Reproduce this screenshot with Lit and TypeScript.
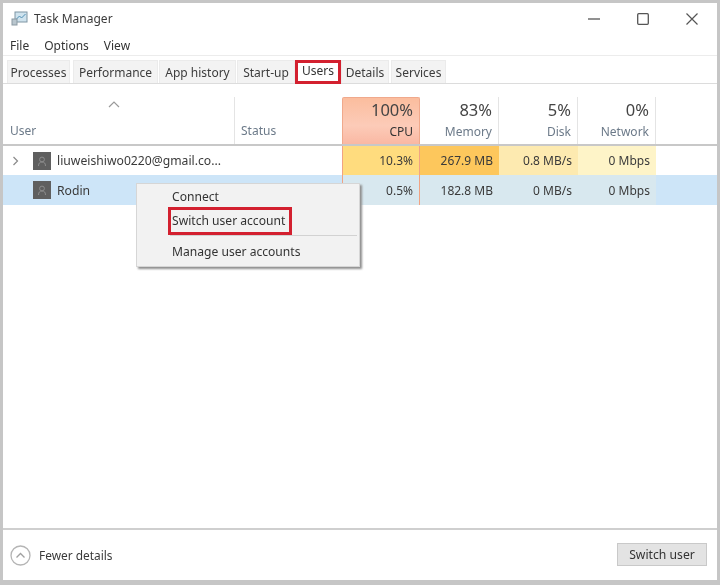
import { LitElement, html, css, svg } from "lit";
import { customElement } from "lit/decorators.js";

const tabs: [string, number, number][] = [
  ["Processes", 0, 63],
  ["Performance", 3, 85],
  ["App history", 1, 77],
  ["Start-up", 1, 58],
  ["Users", 0, 46],
  ["Details", 0, 48],
  ["Services", 2, 55],
];

const heads = [
  { pct: "100%", name: "CPU", hot: true },
  { pct: "83%", name: "Memory" },
  { pct: "5%", name: "Disk" },
  { pct: "0%", name: "Network" },
];

const rows = [
  { user: "liuweishiwo0220@gmail.co...", expand: true, sel: false, cells: [["10.3%", "c1"], ["267.9 MB", "c2"], ["0.8 MB/s", "c3"], ["0 Mbps", "c4"]] },
  { user: "Rodin", expand: false, sel: true, cells: [["0.5%", "b1"], ["182.8 MB", "b1"], ["0 MB/s", "b1"], ["0 Mbps", "b1"]] },
];

const avatar = html`<svg class="avatar" viewBox="0 0 18 18"><rect width="18" height="18" fill="#5f5f5f"/>${svg`<circle cx="9" cy="7.500" r="2.400" fill="none" stroke="#8d8d8d"/><path d="M5.500 14c0-3 1.500-4 3.500-4s3.500 1 3.500 4" fill="none" stroke="#8d8d8d"/>`}</svg>`;

@customElement("app-root")
export class AppRoot extends LitElement {
  static styles = css`
    :host { display: block; width: 720px; height: 585px; background: #c6c6c6; overflow: hidden; }
    .frame { box-sizing: border-box; width: 720px; height: 585px; padding: 3px 3px 5px 3px; filter: blur(0.5px); }
    .win { position: relative; height: 100%; background: #fff; display: flex; flex-direction: column;
      font-family: "Noto Sans", "Open Sans", sans-serif; font-size: 12px; color: #2b2b2b; }
    .title { height: 31px; flex: none; display: flex; align-items: center; padding-left: 8px; gap: 6px; font-size: 12px; color: #3a3a3a; }
    .app-ico { width: 17px; height: 15px; flex: none; }
    .spacer { flex: 1; }
    .wbtns { display: flex; align-items: center; gap: 37px; padding-right: 19px; }
    .wbtns svg { width: 12px; height: 12px; display: block; }
    .menu { height: 21px; flex: none; display: flex; align-items: center; padding-left: 7px; padding-top: 2px; gap: 15px; color: #333; font-size: 12px; box-sizing: border-box; }
    .tabs { height: 29px; flex: none; box-sizing: border-box; display: flex; align-items: flex-end; padding-left: 4px;
      border-top: 1px solid #ececec; border-bottom: 1px solid #dcdcdc; padding-top: 4px; }
    .tab { height: 23px; box-sizing: border-box; background: #f3f3f3; border: 1px solid #ebebeb; border-bottom: none;
      display: flex; align-items: center; justify-content: center; color: #3c3c3c; font-size: 12px; white-space: nowrap; }
    .tab.on { position: relative; background: #fff; border: 3px solid #d3202f; height: 24px; margin-bottom: -1px; padding-bottom: 3px; color: #333; }
    .grid { display: grid; grid-template-columns: 232px 107px 78px 79px 79px 78px 1fr; }
    .thead { flex: none; border-bottom: 2px solid #c8c8c8; height: 60px; box-sizing: content-box; }
    .th { position: relative; box-sizing: border-box; display: flex; flex-direction: column; justify-content: flex-end; margin-top: 13px; padding: 0 6px 5px; color: #6c7a89; font-size: 12px; border-right: 1px solid #e4e4e4; }
    .th.first { padding-left: 7px; }
    .sort { position: absolute; top: 4px; left: 105px; width: 12px; height: 7px; }
    .th.m { align-items: flex-end; padding: 3px 6px 0 0; justify-content: flex-start; }
    .th.m .pct { font-size: 16.500px; line-height: 20px; color: #444; }
    .th.m .nm { font-size: 12px; line-height: 16px; margin-top: 4px; color: #6c7a89; }
    .th.hot { background: linear-gradient(#fbbd9e, #fccbb8 60%, #fab8a3); border: 1px solid #f0a98c; border-bottom: none; border-radius: 2px 2px 0 0; padding: 2px 6px 0 0; }
    .th.hot .nm { color: #333; }
    .row { height: 29px; }
    .row.sel { background: #cde5f8; height: 30px; }
    .cell { display: flex; align-items: center; box-sizing: border-box; white-space: nowrap; font-size: 12px; color: #3a3a3a; }
    .cell.user { gap: 6px; padding-left: 10px; font-size: 12.200px; }
    .chev { width: 14px; height: 10px; flex: none; }
    .avatar { width: 18px; height: 18px; flex: none; }
    .num { justify-content: flex-end; padding-right: 6px; }
    .c1 { background: #ffdc7e; }
    .c2 { background: #fdc75c; }
    .c3 { background: #fdeab0; }
    .c4 { background: #fef4c8; }
    .b1 { background: #d8e8ef; }
    .cpu-edge { border-left: 1px solid #f1a383; border-right: 1px solid #f1a383; }
    .body { flex: 1; }
    .foot { flex: none; height: 52px; box-sizing: border-box; border-top: 2px solid #cfcfcf; display: flex; align-items: center; padding: 0 10px 0 7px; }
    .fewer { display: flex; align-items: center; gap: 8px; color: #3a3a3a; font-size: 11.900px; }
    .circle { width: 21px; height: 21px; display: block; }
    .btn { width: 90px; height: 23px; box-sizing: border-box; background: #e3e3e3; border: 1px solid #c9c9c9; display: flex; align-items: center; justify-content: center; font-size: 12.200px; color: #333; margin-bottom: 1px; }
    .ctx { position: absolute; left: 133px; top: 180px; width: 224px; height: 84px; box-sizing: border-box; background: #f2f2f2; border: 1px solid #d6d6d6;
      box-shadow: 2px 2px 2px #8f8f8f; display: flex; flex-direction: column; padding-top: 1px; font-size: 12.100px; color: #333; }
    .item { height: 22px; flex: none; display: flex; align-items: center; padding-left: 35px; }
    .item.hl { box-sizing: border-box; margin-left: 31px; width: 124px; height: 28px; padding-left: 1px; border: 3px solid #d3202f; padding-bottom: 2px; }
    .sep { height: 1px; background: #d2d2d2; margin: 0 2px 0 33px; flex: none; }
    .item.last { margin-top: 4px; }
  `;

  render() {
    return html`<div class="frame"><div class="win">
      <div class="title">
        <svg class="app-ico" viewBox="0 0 17 15"><rect x="4" y="1" width="12" height="10" fill="#cfe3ee" stroke="#7f95a3"/><path d="M5.500 8l3-3 2 2 4-4" fill="none" stroke="#4f8fb5"/><rect x="1" y="8" width="5" height="6" fill="#b9c6ce" stroke="#8b9aa3"/></svg>
        <span>Task Manager</span><span class="spacer"></span>
        <div class="wbtns">
          <svg viewBox="0 0 12 12"><path d="M0 6h12" stroke="#555" stroke-width="1.300"/></svg>
          <svg viewBox="0 0 12 12"><rect x="0.700" y="0.700" width="10.600" height="10.600" rx="1" fill="none" stroke="#555" stroke-width="1.300"/></svg>
          <svg viewBox="0 0 12 12"><path d="M0.500 0.500l11 11M11.500 0.500l-11 11" stroke="#555" stroke-width="1.200"/></svg>
        </div>
      </div>
      <div class="menu"><span>File</span><span>Options</span><span>View</span></div>
      <div class="tabs">
        ${tabs.map(([t, gap, w]) => html`<div class="tab ${t === "Users" ? "on" : ""}" style="margin-left:${gap}px;width:${w}px">${t}</div>`)}
      </div>
      <div class="grid thead">
        <div class="th first">User
          <svg class="sort" viewBox="0 0 12 7"><path d="M1 6l5-5 5 5" fill="none" stroke="#9a9a9a" stroke-width="1.200"/></svg>
        </div>
        <div class="th" style="border-right:none">Status</div>
        ${heads.map((h) => html`<div class="th m ${h.hot ? "hot" : ""}"><span class="pct">${h.pct}</span><span class="nm">${h.name}</span></div>`)}
        <div></div>
      </div>
      ${rows.map((r) => html`<div class="grid row ${r.sel ? "sel" : ""}">
        <div class="cell user">
          ${r.expand
            ? html`<svg class="chev" viewBox="0 0 14 10"><path d="M0.500 1l4 4-4 4" fill="none" stroke="#8a8a8a" stroke-width="1.200"/></svg>`
            : html`<span class="chev"></span>`}
          ${avatar}<span>${r.user}</span>
        </div>
        <div class="cell"></div>
        ${r.cells.map((c, i) => html`<div class="cell num ${c[1]} ${i === 0 ? "cpu-edge" : ""}">${c[0]}</div>`)}
        <div></div>
      </div>`)}
      <div class="body"></div>
      <div class="foot">
        <div class="fewer">
          <svg class="circle" viewBox="0 0 21 21"><circle cx="10.500" cy="10.500" r="9.500" fill="none" stroke="#b5b5b5" stroke-width="1.300"/><path d="M6.500 12.500l4-4 4 4" fill="none" stroke="#a0a0a0" stroke-width="1.300"/></svg>
          <span>Fewer details</span>
        </div>
        <span class="spacer"></span>
        <div class="btn">Switch user</div>
      </div>
      <div class="ctx">
        <div class="item">Connect</div>
        <div class="item hl">Switch user account</div>
        <div class="sep"></div>
        <div class="item last">Manage user accounts</div>
      </div>
    </div></div>`;
  }
}
